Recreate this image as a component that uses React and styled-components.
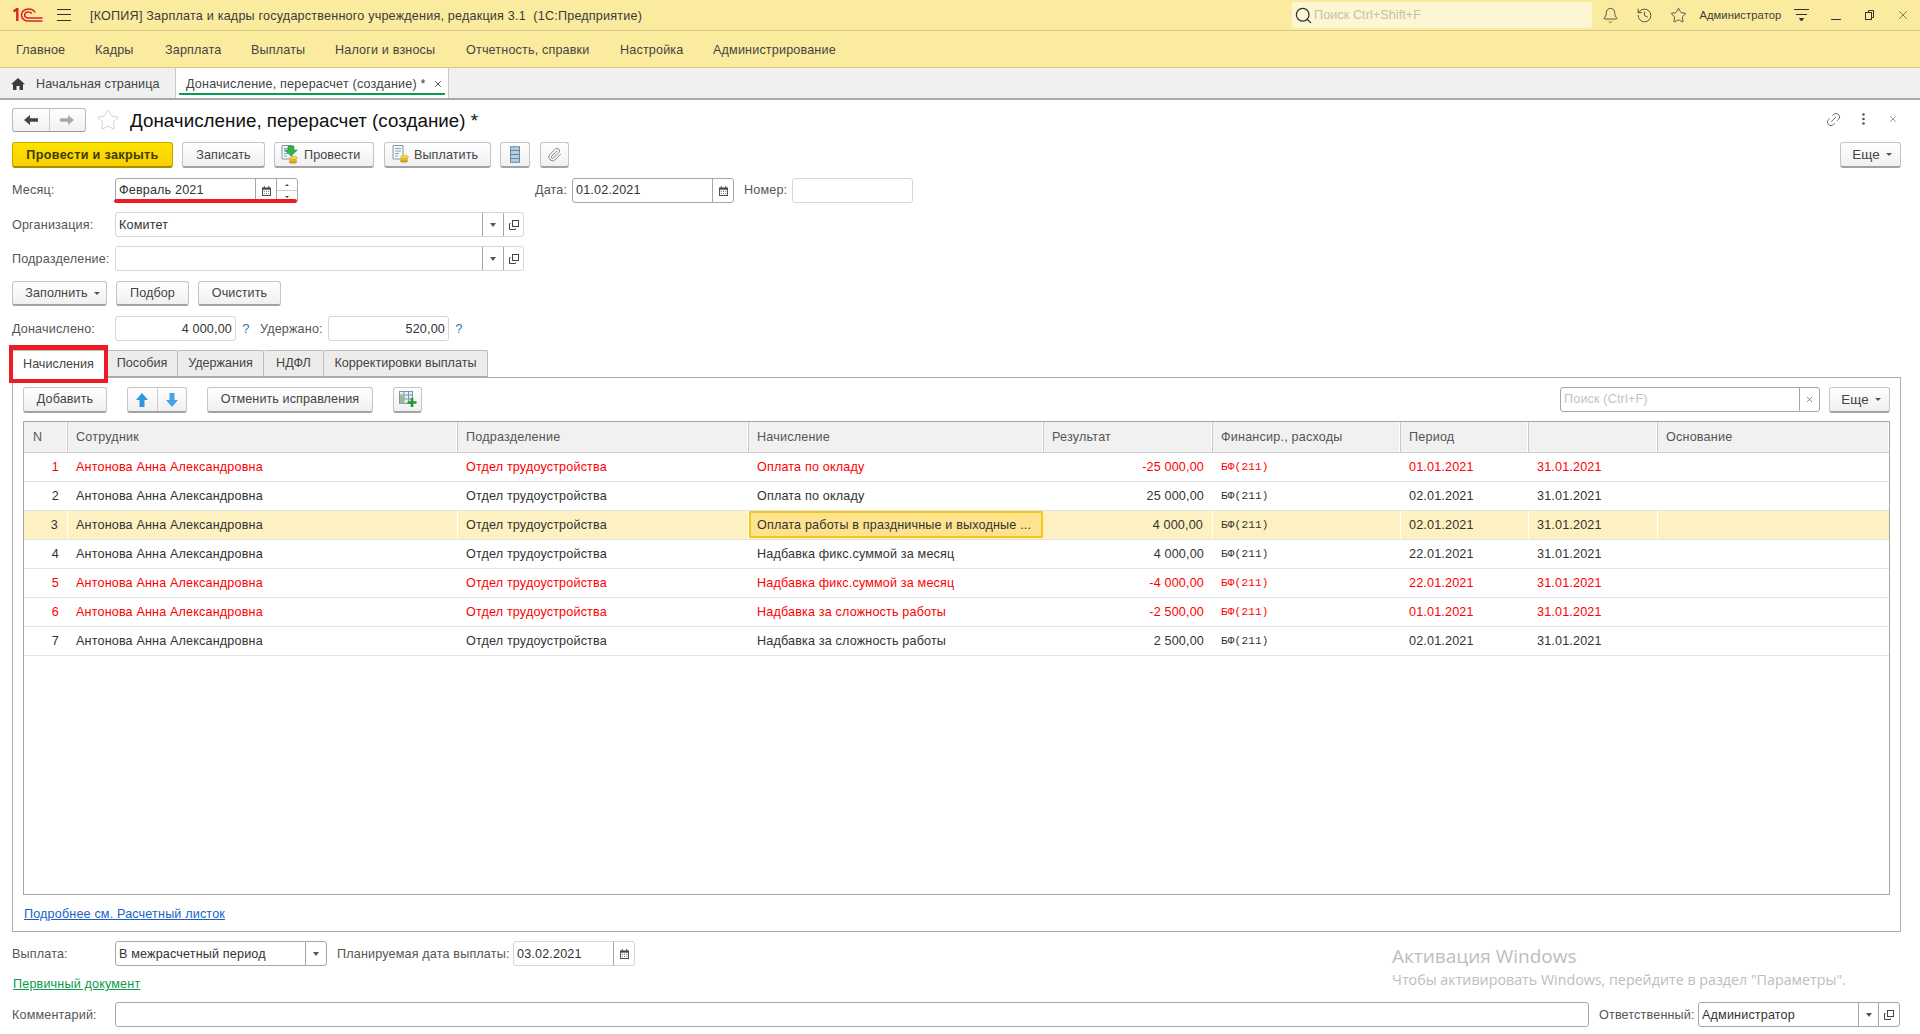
import React from 'react';
import styled, { createGlobalStyle } from 'styled-components';
import { Bell, History, Star, Link2, Paperclip, X, Search } from 'lucide-react';

const Global = createGlobalStyle`
  html, body { margin: 0; padding: 0; background: #fff; }
  body { width: 1920px; height: 1034px; overflow: hidden; font-family: "Liberation Sans", Arial, sans-serif; font-size: 12.6px; letter-spacing: .16px; color: #333; }
  * { box-sizing: border-box; }
`;

const Page = styled.div`
  position: relative; width: 1920px; height: 1034px; display: flex; flex-direction: column;
`;
const TopBar = styled.div`
  height: 31px; background: #fbeb9f; border-bottom: 1px solid #d6c987; display: flex; align-items: center; padding-left: 13px;
`;
const Burger = styled.div`
  width: 14px; height: 12px; margin-left: 14px; border-top: 1px solid #333; border-bottom: 1px solid #333; position: relative;
  &::after { content: ''; position: absolute; left: 0; right: 0; top: 4px; height: 1px; background: #333; }
`;
const AppTitle = styled.div`
  margin-left: 19px; padding-top: 1px; white-space: pre; font-size: 12.6px; letter-spacing: .2px; color: #3a3a3a; flex: 1;
`;
const GlobalSearch = styled.div`
  width: 300px; height: 26px; background: #fdf6d3; border-radius: 3px; display: flex; align-items: center; padding-left: 2px; gap: 1px; color: #c4c0ac; font-size: 12.6px; letter-spacing: .08px;
`;
const TopIcons = styled.div`
  display: flex; align-items: center; width: 328px; height: 30px; position: relative;
`;
const TopIcon = styled.span`
  display: flex; justify-content: center; align-items: center; width: 34px; color: #3c3c3c;
  margin-left: ${p => p.$ml || 0}px;
`;
const UserName = styled.span`
  font-size: 11.2px; margin-left: 4px; width: 86px; color: #3c3c3c; letter-spacing: .1px; white-space: nowrap;
`;
const MenuBar = styled.nav`
  height: 37px; background: #fbeb9f; border-bottom: 1px solid #d6c987; display: flex; align-items: center; padding: 1px 0 0 16px; color: #444;
`;
const MenuItem = styled.span`
  width: ${p => p.$w}px; white-space: nowrap; flex: none;
`;
const OpenTabs = styled.div`
  height: 32px; background: #f0f0f0; border-bottom: 2px solid #a9a9a9; display: flex;
`;
const HomeTab = styled.div`
  width: 176px; height: 30px; display: flex; align-items: center; padding: 1px 0 0 11px; gap: 11px; border-right: 1px solid #c9c9c9; color: #444; letter-spacing: .1px;
`;
const ActiveOpenTab = styled.div`
  width: 273px; height: 30px; background: #fff; border-right: 1px solid #c9c9c9; position: relative; display: flex; align-items: center; padding: 1px 0 0 10px; color: #444; letter-spacing: .18px;
  &::after { content: ''; position: absolute; left: 3px; right: 3px; bottom: 3px; height: 2px; background: #0a9a50; }
`;
const TabClose = styled.span`
  margin-left: 7px; color: #555; display: flex;
`;
const Form = styled.main`
  flex: 1; padding: 8px 19px 0 12px; display: flex; flex-direction: column; min-height: 0;
`;
const TitleRow = styled.div`
  height: 24px; display: flex; align-items: center; flex: none;
`;
const NavGroup = styled.div`
  width: 74px; height: 24px; display: flex; border: 1px solid #bbb; border-bottom-color: #999; border-radius: 3px; background: linear-gradient(#fff, #f1f1f1);
`;
const NavPart = styled.span`
  flex: 1; display: flex; align-items: center; justify-content: center; & + & { border-left: 1px solid #ccc; }
`;
const StarWrap = styled.span`
  margin-left: 10px; display: flex; color: #c8ccd2;
`;
const Title = styled.h1`
  margin: 0 0 0 10px; padding-top: 1px; font-size: 18.8px; font-weight: 400; color: #111; white-space: nowrap; letter-spacing: .02px; flex: 1;
`;
const FormTools = styled.div`
  display: flex; align-items: center; color: #555; margin-right: -7px; margin-top: -2px;
`;
const ToolIcon = styled.span`
  width: 30px; display: flex; justify-content: center;
`;
const Row = styled.div`
  display: flex; align-items: center; height: ${p => p.$h || 25}px; margin-top: ${p => p.$mt ?? 9}px; flex: none; position: relative;
`;
const Btn = styled.button`
  width: ${p => p.$w}px; height: ${p => p.$h || 26}px; margin-left: ${p => p.$ml || 0}px; padding: 0; flex: none;
  font: inherit; color: #444; letter-spacing: .08px;
  background: linear-gradient(#ffffff, #f0f0f0); border: 1px solid #c4c4c4; border-bottom: 2px solid #a3a3a3; border-radius: 3px;
  display: flex; align-items: center; justify-content: center;
`;
const PrimaryBtn = styled(Btn)`
  background: linear-gradient(#fde400, #f6cf00); border-color: #c9a900; border-bottom-color: #a98f00; font-weight: 700; color: #3f3a00; letter-spacing: .34px;
`;
const IconTextBtn = styled(Btn)`
  justify-content: flex-start; padding-left: ${p => p.$pl}px; gap: ${p => p.$gap}px;
`;
const CaretBtn = styled(Btn)`
  padding-left: 6px; gap: 6px;
`;
const MoreBtn = styled(Btn)`
  font-size: 13.4px; gap: 6px; padding-left: 3px; margin-left: ${p => (p.$auto ? 'auto' : `${p.$ml || 0}px`)};
`;
const Caret = styled.i`
  display: inline-block; width: 0; height: 0; border-left: 3px solid transparent; border-right: 3px solid transparent; border-top: 3px solid #555;
`;
const Label = styled.span`
  width: ${p => p.$w || 103}px; margin-left: ${p => p.$ml || 0}px; flex: none; color: #555; white-space: nowrap; padding-bottom: ${p => (p.$lift ? 2 : 0)}px;
`;
const Field = styled.div`
  width: ${p => p.$w}px; height: 25px; margin-left: ${p => p.$ml || 0}px; flex: none; display: flex; background: #fff;
  border: 1px solid ${p => (p.$light ? '#d6d6d6' : '#a6a6a6')}; border-radius: 3px; color: #333;
`;
const FieldValue = styled.span`
  flex: 1; padding: 0 3px ${p => (p.$lift ? 2 : 0)}px; display: flex; align-items: center; white-space: nowrap; min-width: 0;
  justify-content: ${p => (p.$right ? 'flex-end' : 'flex-start')}; ${p => p.$hint && 'color:#c3c3c3;'}
`;
const Seg = styled.span`
  width: ${p => p.$w || 21}px; flex: none; border-left: 1px solid #a6a6a6; display: flex; flex-direction: column; align-items: center; justify-content: center;
`;
const SpinHalf = styled.span`
  flex: 1; width: 100%; display: flex; align-items: center; justify-content: center; & + & { border-top: 1px solid #ccc; }
`;
const SmallCaret = styled.i`
  width: 0; height: 0; border-left: 2px solid transparent; border-right: 2px solid transparent; ${p => (p.$up ? 'border-bottom: 2px solid #444;' : 'border-top: 2px solid #444;')}
`;
const DropCaret = styled.i`
  width: 0; height: 0; border-left: 3px solid transparent; border-right: 3px solid transparent; border-top: 4px solid #555;
`;
const Underline = styled.div`
  position: absolute; left: 102px; top: 21px; width: 183px; height: 4px; background: #ed1c24; border-radius: 2px;
`;
const Help = styled.span`
  width: 24px; flex: none; text-align: center; color: #1f7ab8; font-size: 13px; padding-right: 4px;
`;
const TabStrip = styled.div`
  height: 27px; display: flex; margin-top: 9px; flex: none; position: relative; z-index: 1;
`;
const PageTab = styled.div`
  width: ${p => p.$w}px; height: ${p => (p.$active ? 28 : 27)}px; flex: none; display: flex; align-items: center; justify-content: center; position: relative; padding: 0 ${p => (p.$active ? 2 : 0)}px 2px 0; letter-spacing: 0;
  background: ${p => (p.$active ? '#fff' : '#ececec')}; color: #444; white-space: nowrap;
  border: 1px solid #bcbcbc; border-left-width: ${p => (p.$first ? 1 : 0)}px; border-bottom: ${p => (p.$active ? 0 : 1)}px solid #aaa; border-radius: 2px 2px 0 0;
`;
const RedBox = styled.div`
  position: absolute; left: -4px; top: -6px; width: 99px; height: 38px; border: 4px solid #ed1c24; border-top-width: 5px; z-index: 2;
`;
const Panel = styled.section`
  height: 555px; border: 1px solid #aeaeae; padding: 9px 10px 0; display: flex; flex-direction: column; flex: none;
`;
const PanelTools = styled.div`
  display: flex; height: 26px; align-items: flex-start; flex: none;
  & > button { padding-bottom: 1px; }
`;
const ArrowGroup = styled.div`
  width: 60px; height: 26px; margin-left: 20px; display: flex; border: 1px solid #c4c4c4; border-bottom: 2px solid #a3a3a3; border-radius: 3px; background: linear-gradient(#fff, #f0f0f0); flex: none;
`;
const SearchField = styled(Field)`
  margin-left: auto;
`;
const Grid = styled.div`
  height: 474px; margin-top: 8px; border: 1px solid #a6a6a6; flex: none; overflow: hidden;
`;
const columns = '44px 390px 291px 295px 169px 188px 128px 129px 231px';
const HeadRow = styled.div`
  display: grid; grid-template-columns: ${columns}; height: 31px; border-bottom: 1px solid #cfcfcf;
`;
const HeadCell = styled.div`
  background: #f1f1f1; border-right: 1px solid #c9c9c9; box-shadow: inset -1px 0 0 #fff; color: #555; letter-spacing: .2px; padding: 0 ${p => (p.$n ? 9 : 8)}px 1px; display: flex; align-items: center; white-space: nowrap;
  &:last-child { border-right: 0; }
`;
const DataRow = styled.div`
  display: grid; grid-template-columns: ${columns}; height: 29px; border-bottom: 1px solid #e2e2e6;
  color: ${p => (p.$red ? '#ff0000' : '#333')};
  background: ${p => (p.$sel ? '#fdf0c1' : '#fff')};
`;
const Cell = styled.div`
  padding: 0 ${p => (p.$right ? 9 : 8)}px; display: flex; align-items: center; white-space: nowrap; min-width: 0; justify-content: ${p => (p.$right ? 'flex-end' : 'flex-start')};
  ${p => p.$sel && 'border-right: 1px solid #fff;'}
`;
const CurrentCell = styled(Cell)`
  background: #fde38e; border: 2px solid #f7c51c; padding: 0 6px; height: 27px; margin-right: 1px;
`;
const Fin = styled.span`
  font-family: "Liberation Mono", monospace; font-size: 11px; letter-spacing: .2px;
`;
const PanelLink = styled.a`
  color: #1a5fc8; text-decoration: underline; margin: 12px 0 0 1px; flex: none; height: 16px;
`;
const GreenLink = styled.a`
  color: #0a9a50; text-decoration: underline; padding-left: 1px;
`;
const Watermark = styled.div`
  position: absolute; left: 1392px; top: 943px; color: #bdbdbd; font-family: "Open Sans", sans-serif; letter-spacing: 0; pointer-events: none;
`;
const WmTitle = styled.div`
  font-size: 19px; line-height: 27px; white-space: nowrap;
`;
const WmText = styled.div`
  font-size: 14.27px; line-height: 19px; white-space: nowrap;
`;

const Logo = () => (
  <svg width="30" height="14" viewBox="0 0 30 14" fill="none" stroke="#d8232a" strokeWidth="1.6">
    <path d="M0.5 3.5 L4.3 0.8 V13" strokeWidth="2.4" />
    <path d="M22 4.5 C21 2.2 18.5 1 15.5 1 C11.5 1 8.5 3.5 8.5 7 C8.5 10.5 11.5 13 15.5 13 H29.5" />
    <path d="M18.8 5.6 C18.2 4.6 17 4 15.6 4 C13.4 4 11.7 5.3 11.7 7 C11.7 8.8 13.4 10 15.6 10 H29.5" />
  </svg>
);
const Home = () => (
  <svg width="14" height="12" viewBox="0 0 14 12"><path d="M7 0 L14 6.2 H12 V12 H8.5 V8 H5.5 V12 H2 V6.2 H0 Z" fill="#3c3c3c" /></svg>
);
const Restore = () => (
  <svg width="9" height="10" viewBox="0 0 9 10" fill="none" stroke="#333"><path d="M3.5 2.5 V.5 H8.5 V7.5 H6.5" /><rect x=".5" y="2.5" width="6" height="7" /></svg>
);
const Funnel = () => (
  <svg width="16" height="14" viewBox="0 0 16 14" fill="none" stroke="#333"><path d="M0 1.5 H15 M2 6.5 H13" /><path d="M5.5 10.5 H9.5 L7.5 13 Z" fill="#333" /></svg>
);
const ArrowL = ({ c }) => (
  <svg width="14" height="10" viewBox="0 0 14 10"><path d="M0 5 L6 0 V3.3 H14 V6.7 H6 V10 Z" fill={c} /></svg>
);
const ArrowR = ({ c }) => (
  <svg width="14" height="10" viewBox="0 0 14 10"><path d="M14 5 L8 0 V3.3 H0 V6.7 H8 V10 Z" fill={c} /></svg>
);
const ArrowU = () => (
  <svg width="12" height="14" viewBox="0 0 12 14"><path d="M6 0 L12 7 H8.5 V14 H3.5 V7 H0 Z" fill="#2e97dd" /></svg>
);
const ArrowD = () => (
  <svg width="12" height="14" viewBox="0 0 12 14"><path d="M6 14 L12 7 H8.5 V0 H3.5 V7 H0 Z" fill="#46a3e6" /></svg>
);
const Cal = () => (
  <svg width="9" height="10" viewBox="0 0 10 11"><path d="M0 1.5 H2 V0 H3 V1.5 H7 V0 H8 V1.5 H10 V11 H0 Z" fill="#444" /><path d="M1 4 H9 V10 H1 Z" fill="#fff" /><path d="M2 5.2h1v1H2zM4.5 5.2h1v1h-1zM7 5.2h1v1H7zM2 7.6h1v1H2zM4.5 7.6h1v1h-1zM7 7.6h1v1H7z" fill="#444" /></svg>
);
const OpenForm = () => (
  <svg width="10" height="10" viewBox="0 0 10 10" fill="none" stroke="#444"><rect x="3.5" y=".5" width="6" height="6" /><path d="M1.5 3.5 H.5 V9.5 H6.5 V8.5" /></svg>
);
const Coins = ({ x, y }) => (
  <g transform={`translate(${x} ${y})`}>
    <ellipse cx="4" cy="6" rx="4" ry="1.6" fill="#c79a1e" />
    <ellipse cx="4" cy="4" rx="4" ry="1.6" fill="#e6b92e" />
    <ellipse cx="4.5" cy="1.8" rx="4" ry="1.6" fill="#f5d556" stroke="#b98e1c" strokeWidth=".4" />
  </g>
);
const Doc = () => (
  <>
    <path d="M1 .5 H11 V14 H1 Z" fill="#f4f7fb" stroke="#8595a8" />
    <path d="M3 3.5 H9 M3 6 H9 M3 8.5 H7 M3 11 H6" stroke="#8da0b5" />
  </>
);
const PostIcon = () => (
  <svg width="18" height="19" viewBox="0 0 18 19"><Doc /><path d="M7 1 H13 V5 H16.5 L10 11 L3.5 5 H7 Z" fill="#35b04a" stroke="#1f8a36" strokeWidth=".5" /><Coins x={8} y={11} /></svg>
);
const PayIcon = () => (
  <svg width="18" height="19" viewBox="0 0 18 19"><Doc /><Coins x={8} y={10} /></svg>
);
const ListIcon = () => (
  <svg width="10" height="17" viewBox="0 0 11 18"><rect x=".5" y=".5" width="10" height="17" fill="#b7cfe2" stroke="#5d7d99" /><path d="M.5 4.5 H10.5 M.5 9 H10.5 M.5 13.5 H10.5" stroke="#5d7d99" /></svg>
);
const TableAdd = () => (
  <svg width="18" height="16" viewBox="0 0 18 16"><rect x=".5" y=".5" width="13" height="12" fill="#e9eff5" stroke="#7c97ad" /><path d="M.5 4 H13.5 M.5 8 H13.5 M5 .5 V12.5 M9.5 .5 V12.5" stroke="#7c97ad" /><rect x="1" y="4.5" width="4" height="8" fill="#9db9a0" /><path d="M13 7 V16 M8.5 11.5 H17.5" stroke="#1f9a2e" strokeWidth="2.6" /></svg>
);
const Dots = () => (
  <svg width="3" height="12" viewBox="0 0 3 12" fill="#555"><circle cx="1.5" cy="1.5" r="1.3" /><circle cx="1.5" cy="6" r="1.3" /><circle cx="1.5" cy="10.5" r="1.3" /></svg>
);

const menu = [
  ['Главное', 79], ['Кадры', 70], ['Зарплата', 86], ['Выплаты', 84], ['Налоги и взносы', 131],
  ['Отчетность, справки', 154], ['Настройка', 93], ['Администрирование', 130],
];
const rows = [
  ['1', 'Оплата по окладу', '-25 000,00', '01.01.2021', true],
  ['2', 'Оплата по окладу', '25 000,00', '02.01.2021', false],
  ['3', 'Оплата работы в праздничные и выходные ...', '4 000,00', '02.01.2021', false, true],
  ['4', 'Надбавка фикс.суммой за месяц', '4 000,00', '22.01.2021', false],
  ['5', 'Надбавка фикс.суммой за месяц', '-4 000,00', '22.01.2021', true],
  ['6', 'Надбавка за сложность работы', '-2 500,00', '01.01.2021', true],
  ['7', 'Надбавка за сложность работы', '2 500,00', '02.01.2021', false],
];
const heads = ['N', 'Сотрудник', 'Подразделение', 'Начисление', 'Результат', 'Финансир., расходы', 'Период', '', 'Основание'];

export default function App() {
  return (
    <Page>
      <Global />
      <TopBar>
        <Logo />
        <Burger />
        <AppTitle>[КОПИЯ] Зарплата и кадры государственного учреждения, редакция 3.1  (1С:Предприятие)</AppTitle>
        <GlobalSearch>
          <Search size={19} strokeWidth={1.6} color="#333" />
          Поиск Ctrl+Shift+F
        </GlobalSearch>
        <TopIcons>
          <TopIcon $ml={2}><Bell size={17} strokeWidth={1.2} /></TopIcon>
          <TopIcon><History size={17} strokeWidth={1.2} /></TopIcon>
          <TopIcon><Star size={17} strokeWidth={1.2} /></TopIcon>
          <UserName>Администратор</UserName>
          <TopIcon><Funnel /></TopIcon>
          <TopIcon><svg width="10" height="10" viewBox="0 0 10 10"><path d="M0 9.5 H10" stroke="#333" /></svg></TopIcon>
          <TopIcon><Restore /></TopIcon>
          <TopIcon><X size={14} strokeWidth={1.1} /></TopIcon>
        </TopIcons>
      </TopBar>
      <MenuBar>
        {menu.map(([t, w]) => <MenuItem key={t} $w={w}>{t}</MenuItem>)}
      </MenuBar>
      <OpenTabs>
        <HomeTab><Home />Начальная страница</HomeTab>
        <ActiveOpenTab>Доначисление, перерасчет (создание) *<TabClose><X size={10} strokeWidth={2.4} /></TabClose></ActiveOpenTab>
      </OpenTabs>
      <Form>
        <TitleRow>
          <NavGroup>
            <NavPart><ArrowL c="#444" /></NavPart>
            <NavPart><ArrowR c="#aaa" /></NavPart>
          </NavGroup>
          <StarWrap><Star size={24} strokeWidth={.9} /></StarWrap>
          <Title>Доначисление, перерасчет (создание) *</Title>
          <FormTools>
            <ToolIcon><Link2 size={17} strokeWidth={1.1} style={{ transform: 'rotate(-45deg)' }} /></ToolIcon>
            <ToolIcon><Dots /></ToolIcon>
            <ToolIcon><X size={10} strokeWidth={1.4} /></ToolIcon>
          </FormTools>
        </TitleRow>
        <Row $mt={10} $h={26}>
          <PrimaryBtn $w={161}>Провести и закрыть</PrimaryBtn>
          <Btn $w={83} $ml={9}>Записать</Btn>
          <IconTextBtn $w={100} $ml={9} $pl={6} $gap={5}><PostIcon />Провести</IconTextBtn>
          <IconTextBtn $w={107} $ml={10} $pl={7} $gap={4}><PayIcon />Выплатить</IconTextBtn>
          <Btn $w={30} $ml={9}><ListIcon /></Btn>
          <Btn $w={29} $ml={10}><Paperclip size={15} strokeWidth={1.4} color="#777" /></Btn>
          <MoreBtn $w={61} $auto>Еще <Caret /></MoreBtn>
        </Row>
        <Row $mt={10}>
          <Label $lift>Месяц:</Label>
          <Field $w={183}>
            <FieldValue $lift>Февраль 2021</FieldValue>
            <Seg $w={21}><Cal /></Seg>
            <Seg $w={21}><SpinHalf><SmallCaret $up /></SpinHalf><SpinHalf><SmallCaret /></SpinHalf></Seg>
          </Field>
          <Underline />
          <Label $w={37} $ml={237} $lift>Дата:</Label>
          <Field $w={162}>
            <FieldValue $lift>01.02.2021</FieldValue>
            <Seg $w={21}><Cal /></Seg>
          </Field>
          <Label $w={48} $ml={10} $lift>Номер:</Label>
          <Field $w={121} $light />
        </Row>
        <Row>
          <Label>Организация:</Label>
          <Field $w={409} $light>
            <FieldValue>Комитет</FieldValue>
            <Seg $w={21}><DropCaret /></Seg>
            <Seg $w={20}><OpenForm /></Seg>
          </Field>
        </Row>
        <Row>
          <Label>Подразделение:</Label>
          <Field $w={409} $light>
            <FieldValue />
            <Seg $w={21}><DropCaret /></Seg>
            <Seg $w={20}><OpenForm /></Seg>
          </Field>
        </Row>
        <Row $mt={10} $h={25}>
          <CaretBtn $w={95} $h={25}>Заполнить <Caret /></CaretBtn>
          <Btn $w={73} $h={25} $ml={9}>Подбор</Btn>
          <Btn $w={83} $h={25} $ml={9}>Очистить</Btn>
        </Row>
        <Row $mt={10}>
          <Label>Доначислено:</Label>
          <Field $w={121} $light><FieldValue $right>4 000,00</FieldValue></Field>
          <Help>?</Help>
          <Label $w={68}>Удержано:</Label>
          <Field $w={121} $light><FieldValue $right>520,00</FieldValue></Field>
          <Help>?</Help>
        </Row>
        <TabStrip>
          <PageTab $w={95} $active $first>Начисления<RedBox /></PageTab>
          <PageTab $w={71}>Пособия</PageTab>
          <PageTab $w={86}>Удержания</PageTab>
          <PageTab $w={60}>НДФЛ</PageTab>
          <PageTab $w={164}>Корректировки выплаты</PageTab>
        </TabStrip>
        <Panel>
          <PanelTools>
            <Btn $w={84}>Добавить</Btn>
            <ArrowGroup>
              <NavPart><ArrowU /></NavPart>
              <NavPart><ArrowD /></NavPart>
            </ArrowGroup>
            <Btn $w={166} $ml={20}>Отменить исправления</Btn>
            <Btn $w={29} $ml={20}><TableAdd /></Btn>
            <SearchField $w={260}>
              <FieldValue $hint $lift>Поиск (Ctrl+F)</FieldValue>
              <Seg $w={20}><X size={9} strokeWidth={1.6} color="#444" /></Seg>
            </SearchField>
            <MoreBtn $w={61} $ml={9}>Еще <Caret /></MoreBtn>
          </PanelTools>
          <Grid>
            <HeadRow>
              {heads.map((h, i) => <HeadCell key={i} $n={i === 0}>{h}</HeadCell>)}
            </HeadRow>
            {rows.map(([n, name, sum, from, red, sel]) => (
              <DataRow key={n} $red={red} $sel={sel}>
                <Cell $right $sel={sel}>{n}</Cell>
                <Cell $sel={sel}>Антонова Анна Александровна</Cell>
                <Cell $sel={sel}>Отдел трудоустройства</Cell>
                {sel ? <CurrentCell>{name}</CurrentCell> : <Cell>{name}</Cell>}
                <Cell $right $sel={sel}>{sum}</Cell>
                <Cell $sel={sel}><Fin>БФ(211)</Fin></Cell>
                <Cell $sel={sel}>{from}</Cell>
                <Cell $sel={sel}>31.01.2021</Cell>
                <Cell />
              </DataRow>
            ))}
          </Grid>
          <PanelLink>Подробнее см. Расчетный листок</PanelLink>
        </Panel>
        <Row $mt={9}>
          <Label>Выплата:</Label>
          <Field $w={212}>
            <FieldValue>В межрасчетный период</FieldValue>
            <Seg $w={21}><DropCaret /></Seg>
          </Field>
          <Label $w={176} $ml={10}>Планируемая дата выплаты:</Label>
          <Field $w={122} $light>
            <FieldValue>03.02.2021</FieldValue>
            <Seg $w={21}><Cal /></Seg>
          </Field>
        </Row>
        <Row $mt={9} $h={18}><GreenLink>Первичный документ</GreenLink></Row>
        <Row $mt={9}>
          <Label>Комментарий:</Label>
          <Field $w={1474} />
          <Label $w={99} $ml={10}>Ответственный:</Label>
          <Field $w={202}>
            <FieldValue>Администратор</FieldValue>
            <Seg $w={20}><DropCaret /></Seg>
            <Seg $w={21}><OpenForm /></Seg>
          </Field>
        </Row>
      </Form>
      <Watermark>
        <WmTitle>Активация Windows</WmTitle>
        <WmText>Чтобы активировать Windows, перейдите в раздел "Параметры".</WmText>
      </Watermark>
    </Page>
  );
}
